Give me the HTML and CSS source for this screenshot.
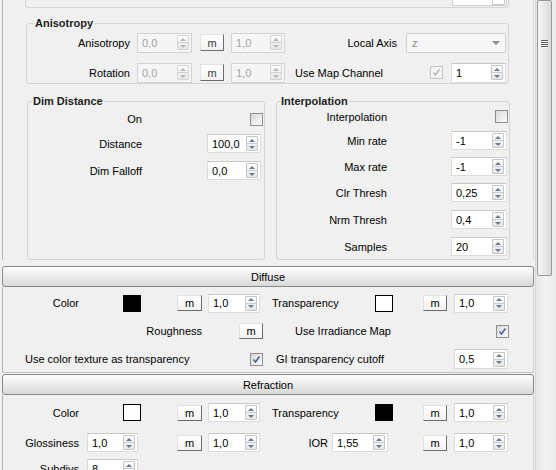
FILE: index.html
```html
<!DOCTYPE html>
<html>
<head>
<meta charset="utf-8">
<link rel="stylesheet" href="styles.css">
</head>
<body>
<div class="window">
  <div class="rollouts">
    <div class="panel top">
      <div class="prev-group"><div class="stub"><span class="stub-sp"></span></div></div>

      <div class="group aniso">
        <div class="group-title t-aniso">Anisotropy</div>
        <div class="row h21 mt2">
          <span class="lbl ra w103">Anisotropy</span>
          <div class="field dis h20 ml7 w55"><span class="val">0,0</span><span class="spin"><i class="up"></i><i class="dn"></i></span></div>
          <span class="mbtn dis ml8 w24">m</span>
          <div class="field dis h20 ml7 w54"><span class="val">1,0</span><span class="spin"><i class="up"></i><i class="dn"></i></span></div>
          <span class="lbl ra w112">Local Axis</span>
          <div class="combo ml9 w100"><span class="val">z</span><span class="arrow"></span></div>
        </div>
        <div class="row h21 mt9">
          <span class="lbl ra w103">Rotation</span>
          <div class="field dis h20 ml7 w55"><span class="val">0,0</span><span class="spin"><i class="up"></i><i class="dn"></i></span></div>
          <span class="mbtn dis ml8 w24">m</span>
          <div class="field dis h20 ml7 w54"><span class="val">1,0</span><span class="spin"><i class="up"></i><i class="dn"></i></span></div>
          <span class="lbl ml10 w135">Use Map Channel</span>
          <span class="cb dis"><svg width="11" height="11" viewBox="0 0 11 11"><path d="M2.5 5.5 L4.5 8 L8.5 2.5" fill="none" stroke="#b4b4b4" stroke-width="1.3"/></svg></span>
          <div class="field h20 ml8 w55"><span class="val">1</span><span class="spin"><i class="up"></i><i class="dn"></i></span></div>
        </div>
      </div>

      <div class="groups">
        <div class="group dim">
          <div class="group-title t-dim">Dim Distance</div>
          <div class="row h20 mt1">
            <span class="lbl ra w114">On</span>
            <span class="cb ml108"></span>
          </div>
          <div class="row h19 mt5">
            <span class="lbl ra w114">Distance</span>
            <div class="field h19 ml65 w54"><span class="val">100,0</span><span class="spin"><i class="up"></i><i class="dn"></i></span></div>
          </div>
          <div class="row h19 mt8">
            <span class="lbl ra w114">Dim Falloff</span>
            <div class="field h19 ml65 w54"><span class="val">0,0</span><span class="spin"><i class="up"></i><i class="dn"></i></span></div>
          </div>
        </div>

        <div class="group interp">
          <div class="group-title t-interp">Interpolation</div>
          <div class="row h17">
            <span class="lbl ra w110">Interpolation</span>
            <span class="cb ml108"></span>
          </div>
          <div class="row h19 mt6">
            <span class="lbl ra w110">Min rate</span>
            <div class="field h19 ml64 w56"><span class="val">-1</span><span class="spin"><i class="up"></i><i class="dn"></i></span></div>
          </div>
          <div class="row h19 mt7">
            <span class="lbl ra w110">Max rate</span>
            <div class="field h19 ml64 w56"><span class="val">-1</span><span class="spin"><i class="up"></i><i class="dn"></i></span></div>
          </div>
          <div class="row h19 mt7">
            <span class="lbl ra w110">Clr Thresh</span>
            <div class="field h19 ml64 w56"><span class="val">0,25</span><span class="spin"><i class="up"></i><i class="dn"></i></span></div>
          </div>
          <div class="row h19 mt8">
            <span class="lbl ra w110">Nrm Thresh</span>
            <div class="field h19 ml64 w56"><span class="val">0,4</span><span class="spin"><i class="up"></i><i class="dn"></i></span></div>
          </div>
          <div class="row h19 mt8">
            <span class="lbl ra w110">Samples</span>
            <div class="field h19 ml64 w56"><span class="val">20</span><span class="spin"><i class="up"></i><i class="dn"></i></span></div>
          </div>
        </div>
      </div>
    </div>

    <div class="rhead diff-head">Diffuse</div>
    <div class="panel diffuse">
      <div class="row h20">
        <span class="lbl ra w76">Color</span>
        <span class="swatch black ml44"></span>
        <span class="mbtn ml36 w25">m</span>
        <div class="field h19 ml6 w52"><span class="val">1,0</span><span class="spin"><i class="up"></i><i class="dn"></i></span></div>
        <span class="lbl ml12 w103">Transparency</span>
        <span class="swatch white"></span>
        <span class="mbtn ml30 w24">m</span>
        <div class="field h19 ml7 w54"><span class="val">1,0</span><span class="spin"><i class="up"></i><i class="dn"></i></span></div>
      </div>
      <div class="row h20 mt8">
        <span class="lbl ra w199">Roughness</span>
        <span class="mbtn ml37 w24">m</span>
        <span class="lbl ml32 w201">Use Irradiance Map</span>
        <span class="cb"><svg width="11" height="11" viewBox="0 0 11 11"><path d="M2.5 5.5 L4.5 8 L8.5 2.5" fill="none" stroke="#4b5d9a" stroke-width="1.5"/></svg></span>
      </div>
      <div class="row h20 mt8">
        <span class="lbl ml22 w225">Use color texture as transparency</span>
        <span class="cb"><svg width="11" height="11" viewBox="0 0 11 11"><path d="M2.5 5.5 L4.5 8 L8.5 2.5" fill="none" stroke="#4b5d9a" stroke-width="1.5"/></svg></span>
        <span class="lbl ml13 w178">GI transparency cutoff</span>
        <div class="field h20 w54"><span class="val">0,5</span><span class="spin"><i class="up"></i><i class="dn"></i></span></div>
      </div>
    </div>

    <div class="rhead refr-head">Refraction</div>
    <div class="panel refr">
      <div class="row h19">
        <span class="lbl ra w76">Color</span>
        <span class="swatch white ml44"></span>
        <span class="mbtn ml36 w25">m</span>
        <div class="field h19 ml6 w52"><span class="val">1,0</span><span class="spin"><i class="up"></i><i class="dn"></i></span></div>
        <span class="lbl ml12 w103">Transparency</span>
        <span class="swatch black"></span>
        <span class="mbtn ml30 w24">m</span>
        <div class="field h19 ml7 w54"><span class="val">1,0</span><span class="spin"><i class="up"></i><i class="dn"></i></span></div>
      </div>
      <div class="row h19 mt11">
        <span class="lbl ra w76">Glossiness</span>
        <div class="field h19 ml8 w51"><span class="val">1,0</span><span class="spin"><i class="up"></i><i class="dn"></i></span></div>
        <span class="mbtn ml39 w25">m</span>
        <div class="field h19 ml6 w52"><span class="val">1,0</span><span class="spin"><i class="up"></i><i class="dn"></i></span></div>
        <span class="lbl ra w68">IOR</span>
        <div class="field h19 ml4 w56"><span class="val">1,55</span><span class="spin"><i class="up"></i><i class="dn"></i></span></div>
        <span class="mbtn ml35 w24">m</span>
        <div class="field h19 ml7 w54"><span class="val">1,0</span><span class="spin"><i class="up"></i><i class="dn"></i></span></div>
      </div>
      <div class="row h19 mt7">
        <span class="lbl ra w76">Subdivs</span>
        <div class="field h19 ml8 w51"><span class="val">8</span><span class="spin"><i class="up"></i><i class="dn"></i></span></div>
      </div>
    </div>
  </div>

  <div class="scrollbar">
    <div class="thumb"><span class="grip"></span></div>
  </div>
</div>
</body>
</html>
```
FILE: styles.css
```css
* { box-sizing: border-box; }
html, body { margin: 0; padding: 0; }
body {
  background: #f0f0f0;
  font-family: "Liberation Sans", Arial, sans-serif;
  font-size: 11px;
  color: #000;
  width: 556px;
  height: 470px;
  overflow: hidden;
}
.window { display: flex; height: 470px; overflow: hidden; }
.rollouts { width: 532px; margin-left: 2px; }

.panel { border-left: 1px solid #b4b4b4; }
.panel.top { border-right: 1px solid #dadada; }

.prev-group {
  margin-left: 22px;
  width: 484px;
  height: 8px;
  border: 1px solid #d5d5d5;
  border-top: none;
  border-radius: 0 0 3px 3px;
  display: flex;
  justify-content: flex-end;
}
.stub {
  width: 55px;
  height: 6px;
  margin-right: 1px;
  border: 1px solid #cfcfcf;
  border-top: none;
  background: #fff;
  display: flex;
  justify-content: flex-end;
}
.stub-sp { width: 13px; margin-right: 1px; border: 1px solid #c9c9c9; border-top: none; }

.group { border: 1px solid #d5d5d5; border-radius: 3px; }
.group-title {
  display: table;
  margin-top: -8px;
  padding: 0 1px;
  height: 14px;
  line-height: 14px;
  background: #f0f0f0;
  font-weight: bold;
  color: #1e1e1e;
}
.t-aniso { margin-left: 7px; }
.t-dim { margin-left: 4px; }
.t-interp { margin-left: 3px; }

.aniso { margin: 15px 0 0 23px; width: 483px; }
.groups { display: flex; margin-top: 17px; }
.dim { margin-left: 24px; width: 238px; }
.interp { margin-left: 11px; width: 234px; padding-bottom: 3px; }

.row { display: flex; align-items: center; }
.h17 { height: 17px; } .h19 { height: 19px; } .h20 { height: 20px; } .h21 { height: 21px; }
.mt1 { margin-top: 1px; } .mt2 { margin-top: 2px; } .mt5 { margin-top: 5px; }
.mt6 { margin-top: 6px; } .mt7 { margin-top: 7px; } .mt8 { margin-top: 8px; }
.mt9 { margin-top: 9px; } .mt11 { margin-top: 11px; }

.ml4 { margin-left: 4px; } .ml6 { margin-left: 6px; } .ml7 { margin-left: 7px; }
.ml8 { margin-left: 8px; } .ml9 { margin-left: 9px; } .ml10 { margin-left: 10px; }
.ml12 { margin-left: 12px; } .ml13 { margin-left: 13px; } .ml22 { margin-left: 22px; }
.ml30 { margin-left: 30px; } .ml32 { margin-left: 32px; } .ml35 { margin-left: 35px; }
.ml36 { margin-left: 36px; } .ml37 { margin-left: 37px; } .ml39 { margin-left: 39px; }
.ml44 { margin-left: 44px; } .ml64 { margin-left: 64px; } .ml65 { margin-left: 65px; }
.ml108 { margin-left: 108px; }

.w24 { width: 24px; } .w25 { width: 25px; } .w51 { width: 51px; } .w52 { width: 52px; }
.w54 { width: 54px; } .w55 { width: 55px; } .w56 { width: 56px; } .w68 { width: 68px; }
.w76 { width: 76px; } .w100 { width: 100px; } .w103 { width: 103px; } .w110 { width: 110px; }
.w112 { width: 112px; } .w114 { width: 114px; } .w135 { width: 135px; } .w178 { width: 178px; }
.w199 { width: 199px; } .w201 { width: 201px; } .w225 { width: 225px; }

.lbl { flex: none; white-space: nowrap; line-height: 14px; }
.ra { text-align: right; }

.field {
  flex: none;
  display: flex;
  align-items: center;
  background: #fff;
  border: 1px solid #dcdcdc;
  border-top-color: #c9c9c9;
  padding-left: 4px;
}
.field .val { flex: 1; line-height: 14px; }
.field.dis { background: #f5f5f5; border-color: #d2d2d2; color: #a3a3a3; }

.spin {
  flex: none;
  width: 12px;
  height: 15px;
  margin-right: 2px;
  border: 1px solid #c6c6c6;
  border-radius: 1px;
  background: linear-gradient(#fcfcfc, #e7e7e7);
  display: flex;
  flex-direction: column;
}
.spin i { flex: 1; display: flex; align-items: center; justify-content: center; }
.spin i + i { border-top: 1px solid #cdcdcd; }
.spin i::before {
  content: "";
  border-left: 3px solid transparent;
  border-right: 3px solid transparent;
}
.spin .up::before { border-bottom: 3px solid #6b7993; }
.spin .dn::before { border-top: 3px solid #6b7993; }
.field.dis .spin .up::before { border-bottom-color: #b8b8b8; }
.field.dis .spin .dn::before { border-top-color: #b8b8b8; }
.field.dis .spin { border-color: #d4d4d4; }

.mbtn {
  flex: none;
  height: 16px;
  display: flex;
  align-items: center;
  justify-content: center;
  background: linear-gradient(#ffffff, #f2f2f2);
  border: 1px solid;
  border-color: #e2e2e2 #6c6c6c #6c6c6c #e2e2e2;
  line-height: 12px;
}
.mbtn.dis { height: 17px; color: #3c3c3c; }

.combo {
  flex: none;
  height: 20px;
  display: flex;
  align-items: center;
  padding-left: 5px;
  border: 1px solid #cfcfcf;
  border-radius: 2px;
  background: #f7f7f7;
  color: #8c8c8c;
}
.combo .val { flex: 1; }
.combo .arrow {
  margin-right: 5px;
  border-left: 4px solid transparent;
  border-right: 4px solid transparent;
  border-top: 4px solid #8e8e8e;
}

.cb {
  flex: none;
  width: 13px;
  height: 13px;
  border: 1px solid #8f8f8f;
  background: linear-gradient(135deg, #d9d9d9, #fbfbfb);
  display: flex;
  align-items: center;
  justify-content: center;
}
.cb svg { display: block; }
.cb.dis { border-color: #c4c4c4; background: #f4f4f4; }

.swatch { flex: none; width: 18px; height: 17px; border: 1px solid #000; }
.swatch.black { background: #000; }
.swatch.white { background: #fff; }

.rhead {
  height: 21px;
  border: 1px solid #888;
  border-radius: 3px;
  background: linear-gradient(#fefefe, #d8d8d8);
  display: flex;
  align-items: center;
  justify-content: center;
  line-height: 14px;
}
.diff-head { margin-top: 6px; }
.refr-head { margin-top: 1px; }
.panel.diffuse {
  border-right: 1px solid #d0d0d0;
  border-bottom: 1px solid #c4c4c4;
  padding-top: 6px;
  padding-bottom: 3px;
}
.panel.refr { border-right: 1px solid #d0d0d0; padding-top: 8px; height: 90px; }

.scrollbar {
  width: 21px;
  margin-left: 1px;
  border-left: 1px solid #d6d6d6;
  padding-left: 1px;
  background: linear-gradient(to right, #e6e6e6, #f3f3f3 45%, #e9e9e9);
}
.thumb {
  width: 15px;
  height: 276px;
  border: 1px solid #979797;
  border-radius: 2px;
  background: linear-gradient(to right, #f5f5f5, #e8e8e8 50%, #d8d8d8);
  display: flex;
  justify-content: center;
  padding-top: 39px;
}
.grip {
  width: 7px;
  height: 8px;
  background: repeating-linear-gradient(#5e5e5e 0 1px, #f2f2f2 1px 2px);
}
```
